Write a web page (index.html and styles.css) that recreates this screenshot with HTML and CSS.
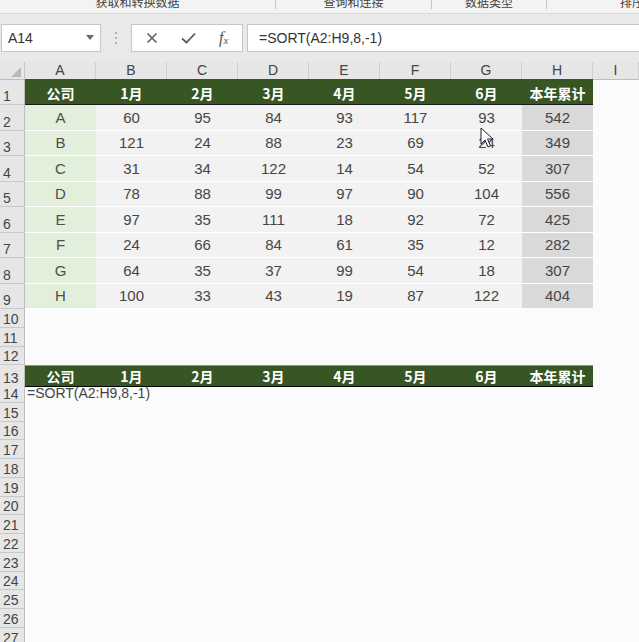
FILE: index.html
```html
<!DOCTYPE html>
<html>
<head>
    <title>SORT</title>
    <link rel="stylesheet" href="styles.css">
</head>
<body>
    <div class="ribbon">
        <div class="group g1"><span>获取和转换数据</span></div>
        <div class="group g2"><span>查询和连接</span></div>
        <div class="group g3"><span>数据类型</span></div>
        <div class="group g4"><span>排序和筛选</span></div>
    </div>

    <div class="fbar">
        <div class="namebox">
            <span>A14</span>
            <svg class="drop" width="8" height="5" viewBox="0 0 8 5"><path d="M0 0 L8 0 L4 5 Z" fill="#6a6a6a"/></svg>
        </div>
        <div class="dots"><i></i><i></i><i></i></div>
        <div class="btns">
            <svg width="12" height="12" viewBox="0 0 12 12"><path d="M1.5 1.5 L10.5 10.5 M10.5 1.5 L1.5 10.5" stroke="#5a5a5a" stroke-width="1.5"/></svg>
            <svg width="15" height="12" viewBox="0 0 15 12"><path d="M1 6.5 L5.5 10.5 L14 1.5" stroke="#5a5a5a" stroke-width="1.8" fill="none"/></svg>
            <span class="fx">f<sub>x</sub></span>
        </div>
        <div class="formula">=SORT(A2:H9,8,-1)</div>
    </div>

    <div class="sheet" id="sheet"></div>

    <svg class="pointer" width="14" height="22" viewBox="0 0 14 22">
        <path d="M1 1 L1 17 L5 13 L8 20 L10.5 19 L7.5 12 L13 12 Z" fill="#fff" stroke="#222" stroke-width="1"/>
    </svg>

    <script>
        const cols = ['A', 'B', 'C', 'D', 'E', 'F', 'G', 'H', 'I'];
        const heads = ['公司', '1月', '2月', '3月', '4月', '5月', '6月', '本年累计'];
        const data = [
            ['A', 60, 95, 84, 93, 117, 93, 542],
            ['B', 121, 24, 88, 23, 69, 24, 349],
            ['C', 31, 34, 122, 14, 54, 52, 307],
            ['D', 78, 88, 99, 97, 90, 104, 556],
            ['E', 97, 35, 111, 18, 92, 72, 425],
            ['F', 24, 66, 84, 61, 35, 12, 282],
            ['G', 64, 35, 37, 99, 54, 18, 307],
            ['H', 100, 33, 43, 19, 87, 122, 404]
        ];

        const sheet = document.getElementById('sheet');

        function addRow(cls, label, cells) {
            let html = `<div class="row ${cls}"><div class="rh">${label}</div>`;
            cells.forEach(c => { html += `<div class="cell ${c.cls || ''}">${c.text || ''}</div>`; });
            sheet.insertAdjacentHTML('beforeend', html + '</div>');
        }

        // column headings
        let headRow = '<div class="row r-cols"><div class="corner"><i></i></div>';
        cols.forEach(c => { headRow += `<div class="ch">${c}</div>`; });
        sheet.insertAdjacentHTML('beforeend', headRow + '</div>');

        const headCells = heads.map(h => ({ cls: 'hd', text: h })).concat([{}]);

        addRow('r-title', 1, headCells);
        data.forEach((r, i) => {
            const cells = r.map((v, j) => ({
                cls: j === 0 ? 'co' : (j === 7 ? 'tot' : 'num'),
                text: v
            }));
            cells.push({});
            addRow('r-data', i + 2, cells);
        });

        for (let n = 10; n <= 27; n++) {
            if (n === 13) {
                addRow('r-empty r-sub', n, headCells);
            } else if (n === 14) {
                addRow('r-empty', n, [{ cls: 'fx-text', text: '=SORT(A2:H9,8,-1)' }].concat(Array(8).fill({})));
            } else {
                addRow('r-empty', n, Array(9).fill({}));
            }
        }
    </script>
</body>
</html>
```

FILE: styles.css
```css
body {
    margin: 0;
    width: 639px;
    height: 642px;
    overflow: hidden;
    background: #fbfbfb;
    font-family: 'Liberation Sans', 'Noto Sans CJK SC', sans-serif;
    position: relative;
}
.ribbon {
    display: flex;
    height: 13px;
    background: #f3f3f3;
    border-bottom: 1px solid #dadada;
    overflow: hidden;
}
.group {
    border-right: 1px solid #c4c4c4;
    text-align: center;
    font-family: 'Noto Sans CJK SC', sans-serif;
    font-size: 12px;
    line-height: 12px;
    color: #444;
    white-space: nowrap;
    overflow: hidden;
    height: 9px;
}
.group span {
    display: block;
    margin-top: -4px;
}
.g1 { width: 275px; }
.g2 { width: 155px; }
.g3 { width: 114px; }
.g4 { flex: 1; text-align: left; padding-left: 73px; border-right: none; }

.fbar {
    display: flex;
    align-items: center;
    height: 48px;
    background: #e9e9e9;
}
.namebox, .btns, .formula {
    height: 26px;
    background: #fff;
    border: 1px solid #c6c6c6;
    display: flex;
    align-items: center;
    margin-top: -1px;
}
.namebox {
    width: 92px;
    margin-left: 1px;
    padding-left: 6px;
    font-size: 14px;
    color: #333;
    justify-content: space-between;
}
.drop {
    margin-right: 6px;
}
.dots {
    width: 30px;
    display: flex;
    flex-direction: column;
    align-items: center;
    gap: 3px;
}
.dots i {
    width: 2px;
    height: 2px;
    background: #b0b0b0;
}
.btns {
    width: 106px;
    justify-content: space-around;
    padding: 0 2px;
}
.fx {
    font-family: 'Liberation Serif', serif;
    font-style: italic;
    font-size: 16px;
    color: #555;
}
.fx sub {
    font-size: 11px;
    vertical-align: -1px;
}
.formula {
    flex: 1;
    margin-left: 4px;
    border-right: none;
    padding-left: 11px;
    font-size: 14px;
    color: #333;
}

.row {
    display: grid;
    grid-template-columns: 25px repeat(8, 71px) 1fr;
}
.r-cols { height: 17px; }
.r-title { height: 26px; }
.r-data { height: 25.5px; }
.r-empty { height: 18.75px; }

.corner {
    background: #e6e6e6;
    border-right: 1px solid #c6c6c6;
    border-bottom: 1px solid #bdbdbd;
    position: relative;
}
.corner i {
    position: absolute;
    right: 3px;
    bottom: 2px;
    width: 0;
    height: 0;
    border-left: 10px solid transparent;
    border-bottom: 10px solid #b9b9b9;
}
.ch {
    background: #e6e6e6;
    border-right: 1px solid #cfcfcf;
    border-bottom: 1px solid #bdbdbd;
    text-align: center;
    font-size: 14px;
    line-height: 17px;
    color: #444;
}
.rh {
    background: #e6e6e6;
    border-right: 1px solid #bdbdbd;
    border-bottom: 1px solid #c9c9c9;
    font-size: 14px;
    color: #444;
    display: flex;
    align-items: flex-end;
    padding-left: 3px;
    line-height: 16px;
}
.cell {
    display: flex;
    align-items: center;
    justify-content: center;
    font-size: 15px;
    color: #464646;
}
.num {
    background: #f2f2f2;
    border-bottom: 1px solid #fff;
}
.co {
    background: #e2efda;
    border-bottom: 1px solid #fff;
    color: #4e4e4e;
}
.tot {
    background: #d9d9d9;
    border-bottom: 1px solid #fff;
}
.hd {
    background: #375623;
    color: #fff;
    font-family: 'Noto Sans CJK SC', sans-serif;
    font-weight: bold;
    font-size: 14px;
    padding-top: 2px;
    border-bottom: 1px solid #1a1a1a;
}
.r-sub .hd {
    padding-top: 0;
    border-top: 1px solid #8f8f8f;
    border-bottom: 1px solid #000;
}
.fx-text {
    justify-content: flex-start;
    padding-left: 2px;
    white-space: nowrap;
    overflow: visible;
    font-size: 14px;
    color: #444;
}
.pointer {
    position: absolute;
    left: 480px;
    top: 127px;
}
```
